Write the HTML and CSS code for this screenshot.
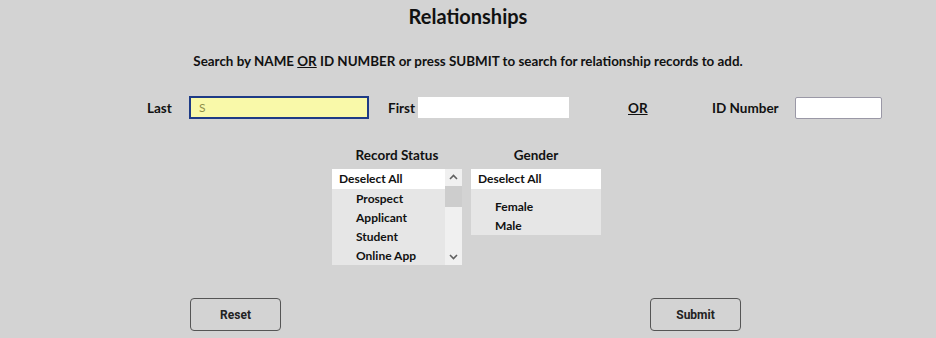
FILE: index.html
```html
<!DOCTYPE html>
<html>
  <head>
    <title>Relationships</title>
    <link rel="stylesheet" href="styles.css">
  </head>
  <body>
    <div class="page">
      <h1 class="title">Relationships</h1>

      <p class="hint">Search by NAME <u>OR</u> ID NUMBER or press SUBMIT to search for relationship records to add.</p>

      <div class="search-row">
        <label class="lbl lbl-last">Last</label>
        <input type="text" class="inp inp-last" value="S" />
        <label class="lbl lbl-first">First</label>
        <input type="text" class="inp inp-first" />
        <span class="lbl or"><u>OR</u></span>
        <label class="lbl lbl-id">ID Number</label>
        <input type="text" class="inp inp-id" />
      </div>

      <div class="filters">
        <div class="filter">
          <div class="filter-head">Record Status</div>
          <div class="listbox listbox-status">
            <div class="list-items">
              <div class="deselect">Deselect All</div>
              <div class="item">Prospect</div>
              <div class="item">Applicant</div>
              <div class="item">Student</div>
              <div class="item">Online App</div>
            </div>
            <div class="scrollbar">
              <svg class="arrow" width="17" height="17" viewBox="0 0 17 17"><polyline points="5,10 8.5,6.5 12,10" fill="none" stroke="#606060" stroke-width="1.6" /></svg>
              <div class="thumb"></div>
              <div class="track"></div>
              <svg class="arrow" width="17" height="17" viewBox="0 0 17 17"><polyline points="5,7 8.5,10.5 12,7" fill="none" stroke="#606060" stroke-width="1.6" /></svg>
            </div>
          </div>
        </div>

        <div class="filter">
          <div class="filter-head">Gender</div>
          <div class="listbox listbox-gender">
            <div class="list-items">
              <div class="deselect">Deselect All</div>
              <div class="item item-first">Female</div>
              <div class="item">Male</div>
            </div>
          </div>
        </div>
      </div>

      <div class="buttons">
        <button class="btn">Reset</button>
        <button class="btn">Submit</button>
      </div>
    </div>
  </body>
</html>
```
FILE: styles.css
```css
body {
  margin: 0;
  background: #d3d3d3;
  font-family: "Lato", "Open Sans", sans-serif;
  font-weight: 700;
  color: #111;
}
.page {
  width: 936px;
  height: 338px;
  overflow: hidden;
}
.title {
  margin: 0;
  height: 32px;
  line-height: 32px;
  font-size: 20px;
  text-align: center;
}
.hint {
  margin: 19px 0 0;
  line-height: 20px;
  font-size: 13.4px;
  text-align: center;
}
.search-row {
  display: flex;
  align-items: center;
  height: 23px;
  margin-top: 25px;
  padding-left: 147px;
}
.lbl {
  font-size: 13.5px;
  padding-top: 1px;
}
.inp {
  box-sizing: border-box;
  height: 21px;
  border: none;
  background: #fff;
  font-family: "Lato", sans-serif;
  font-size: 12px;
  padding: 0 8px;
  outline: none;
}
.lbl-last {
  width: 42px;
}
.inp-last {
  width: 180px;
  height: 23px;
  background: #f9f9a9;
  border: 2px solid #1e3b86;
  color: #8f8f4a;
}
.lbl-first {
  margin-left: 19px;
  width: 30px;
}
.inp-first {
  width: 151px;
}
.or {
  margin-left: 59px;
  width: 84px;
}
.lbl-id {
  width: 83px;
}
.inp-id {
  width: 87px;
  height: 22px;
  border: 1px solid #9a98a6;
  border-radius: 2px;
}
.filters {
  display: flex;
  justify-content: center;
  gap: 9px;
  margin-top: 27px;
  padding-right: 3px;
}
.filter {
  width: 130px;
}
.filter-head {
  height: 18px;
  line-height: 18px;
  text-align: center;
  font-size: 13.5px;
  margin-bottom: 5px;
}
.listbox {
  display: flex;
  background: #e6e6e6;
  font-size: 12px;
}
.listbox-status {
  height: 96px;
}
.listbox-gender {
  height: 66px;
}
.list-items {
  flex: 1;
}
.deselect {
  height: 20px;
  line-height: 20px;
  background: #fff;
  padding-left: 7px;
}
.item {
  height: 19px;
  line-height: 19px;
  padding-left: 24px;
}
.item-first {
  margin-top: 8px;
}
.scrollbar {
  width: 17px;
  display: flex;
  flex-direction: column;
  background: #f0f0f0;
}
.arrow {
  display: block;
}
.thumb {
  height: 21px;
  background: #cdcdcd;
}
.track {
  flex: 1;
}
.buttons {
  display: flex;
  justify-content: space-between;
  width: 551px;
  margin: 33px 0 0 190px;
}
.btn {
  width: 91px;
  height: 33px;
  background: #d3d3d3;
  border: 1px solid #555;
  border-radius: 4px;
  font-family: "Roboto", "Liberation Sans", sans-serif;
  font-weight: 700;
  font-size: 12px;
  color: #222;
}
```
